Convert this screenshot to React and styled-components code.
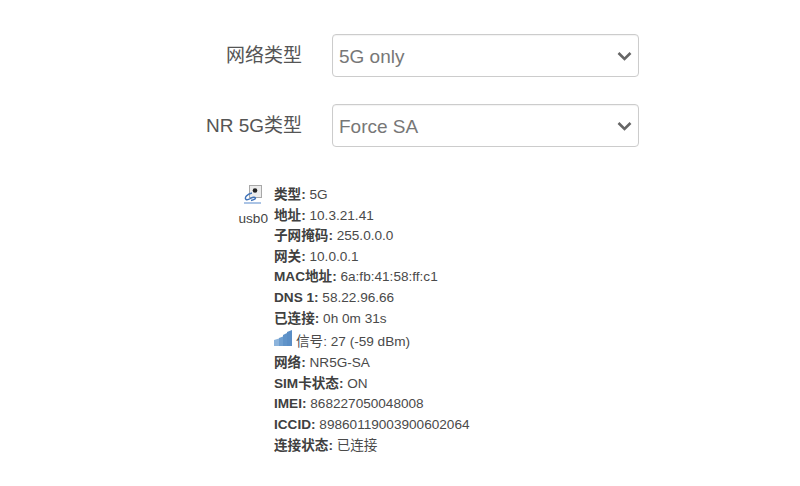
import React from "react";
import styled, { createGlobalStyle } from "styled-components";

const GlobalStyle = createGlobalStyle`
  html, body {
    margin: 0;
    padding: 0;
    background: #fff;
  }
  body {
    font-family: "Liberation Sans", "Noto Sans CJK SC", sans-serif;
    color: #404040;
  }
`;

const Page = styled.div`
  width: 800px;
  height: 486px;
  overflow: hidden;
  padding-top: 34px;
  box-sizing: border-box;
`;

const Form = styled.div`
  display: flex;
  flex-direction: column;
  gap: 27px;
`;

const FormRow = styled.div`
  display: flex;
  align-items: center;
  height: 43px;
`;

const FormLabel = styled.div`
  width: 302px;
  text-align: right;
  font-size: 19px;
  color: #555;
  margin-bottom: 4px;
`;

const SelectBox = styled.div`
  width: 307px;
  height: 43px;
  margin-left: 30px;
  box-sizing: border-box;
  border: 1.5px solid #ccc;
  border-radius: 4px;
  box-shadow: inset 0 1px 1px rgba(0, 0, 0, 0.05);
  display: flex;
  align-items: center;
  justify-content: space-between;
  padding: 2px 6px 0 6px;
  font-size: 19px;
  color: #777;
`;

const Chevron = styled.svg`
  width: 15px;
  height: 10px;
  margin-bottom: 1px;
  fill: none;
  stroke: #666;
  stroke-width: 2.6;
`;

const Status = styled.div`
  display: flex;
  margin-top: 38px;
`;

const DeviceCol = styled.div`
  width: 268px;
  display: flex;
  flex-direction: column;
  align-items: flex-end;
  flex-shrink: 0;
  font-size: 13.6px;
  color: #444;
`;

const DeviceIcon = styled.svg`
  width: 20px;
  height: 20px;
  margin-right: 5px;
`;

const DeviceName = styled.div`
  margin-top: 6px;
  line-height: 16px;
`;

const InfoList = styled.div`
  margin-left: 6px;
  font-size: 13.6px;
  color: #4a4a4a;
`;

const InfoRow = styled.div`
  height: 20.6px;
  line-height: 20.6px;
  white-space: pre;
`;

const SignalRow = styled.div`
  display: flex;
  align-items: flex-end;
  height: 24px;
  box-sizing: border-box;
  padding-bottom: 1px;
  line-height: 20.6px;
  white-space: pre;
`;

const Key = styled.b`
  font-weight: bold;
  color: #404040;
`;

const SignalIcon = styled.svg`
  width: 19px;
  height: 16px;
  margin-right: 3px;
  margin-bottom: 6px;
`;

const rows = [
  ["类型", "5G"],
  ["地址", "10.3.21.41"],
  ["子网掩码", "255.0.0.0"],
  ["网关", "10.0.0.1"],
  ["MAC地址", "6a:fb:41:58:ff:c1"],
  ["DNS 1", "58.22.96.66"],
  ["已连接", "0h 0m 31s"],
];

const rows2 = [
  ["网络", "NR5G-SA"],
  ["SIM卡状态", "ON"],
  ["IMEI", "868227050048008"],
  ["ICCID", "89860119003900602064"],
  ["连接状态", "已连接"],
];

function Info({ label, value }) {
  return (
    <InfoRow>
      <Key>{label}:</Key> {value}
    </InfoRow>
  );
}

function SelectChevron() {
  return (
    <Chevron viewBox="0 0 15 10">
      <path d="M1.5 2 L7.5 8 L13.5 2" />
    </Chevron>
  );
}

export default function App() {
  return (
    <Page>
      <GlobalStyle />
      <Form>
        <FormRow>
          <FormLabel>网络类型</FormLabel>
          <SelectBox>
            5G only
            <SelectChevron />
          </SelectBox>
        </FormRow>
        <FormRow>
          <FormLabel>NR 5G类型</FormLabel>
          <SelectBox>
            Force SA
            <SelectChevron />
          </SelectBox>
        </FormRow>
      </Form>
      <Status>
        <DeviceCol>
          <DeviceIcon viewBox="0 0 20 20">
            <rect x="6.5" y="0.5" width="12" height="12" fill="#ececec" stroke="#a8a8a8" strokeWidth="1" />
            <circle cx="12" cy="5.5" r="2.3" fill="#222" />
            <path d="M9 8 C4 9 1 13 3 14.5 C6 16 9 11 12 12.5 C13.5 13.5 11 15 8 15.5" fill="none" stroke="#3f72b8" strokeWidth="1.4" />
            <path d="M1 18 H18" stroke="#8fb0dc" strokeWidth="1.5" />
          </DeviceIcon>
          <DeviceName>usb0</DeviceName>
        </DeviceCol>
        <InfoList>
          {rows.map(([label, value]) => (
            <Info key={label} label={label} value={value} />
          ))}
          <SignalRow>
            <SignalIcon viewBox="0 0 19 16">
              <path d="M0 16 V10 L5 8.5 V16 Z" fill="#8db4dc" />
              <path d="M5 16 V8 L9 6.5 V16 Z" fill="#6f9fd0" />
              <path d="M9 16 V5 L13 3 V16 Z" fill="#5f93c9" />
              <path d="M13 16 V2 L18 0 V16 Z" fill="#5a8ec6" />
            </SignalIcon>
            信号: 27 (-59 dBm)
          </SignalRow>
          {rows2.map(([label, value]) => (
            <Info key={label} label={label} value={value} />
          ))}
        </InfoList>
      </Status>
    </Page>
  );
}
